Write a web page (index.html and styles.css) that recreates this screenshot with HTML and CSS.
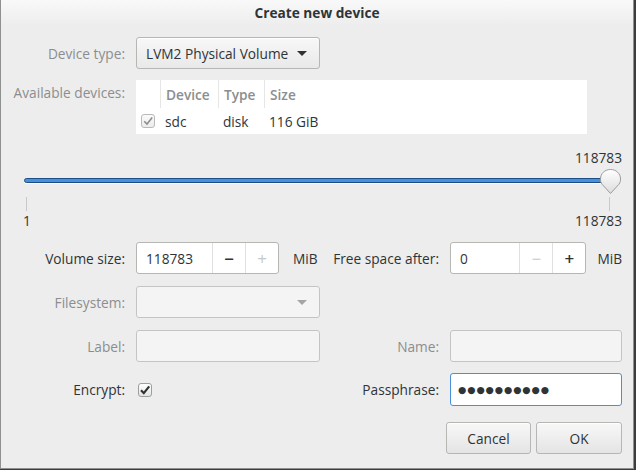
FILE: index.html
```html
<!DOCTYPE html>
<html>
<head>
<meta charset="utf-8">
<link rel="stylesheet" href="styles.css">
</head>
<body>
<div class="window">
  <div class="titlebar">Create new device</div>

  <div class="row r-type">
    <div class="lbl dim">Device type:</div>
    <div class="combo"><span>LVM2 Physical Volume</span><span class="arrow"></span></div>
  </div>

  <div class="row r-devices">
    <div class="lbl dim top">Available devices:</div>
    <div class="table">
      <div class="trow thead">
        <div class="c c0"></div>
        <div class="c c1">Device</div>
        <div class="c c2">Type</div>
        <div class="c c3">Size</div>
      </div>
      <div class="trow tbody">
        <div class="c c0"><span class="check dis"><svg viewBox="0 0 14 14" width="14" height="14"><path d="M3.2 7.2 L6 10 L11.2 3.6" fill="none" stroke="#8b8e8f" stroke-width="1.6"/></svg></span></div>
        <div class="c c1">sdc</div>
        <div class="c c2">disk</div>
        <div class="c c3">116 GiB</div>
      </div>
    </div>
  </div>

  <div class="slider">
    <div class="slider-value">118783</div>
    <div class="track-area">
      <div class="track"></div>
      <svg class="handle" viewBox="0 0 21 26" width="21" height="26">
        <defs><linearGradient id="hg" x1="0" y1="0" x2="0" y2="1"><stop offset="0" stop-color="#ffffff"/><stop offset="1" stop-color="#dcdcdc"/></linearGradient></defs>
        <path d="M10.5 24.5 L2.3 15.5 C0.6 13.6 0.5 11.5 0.5 10 C0.5 4.5 4.8 0.5 10.5 0.5 C16.2 0.5 20.5 4.5 20.5 10 C20.5 11.5 20.4 13.6 18.7 15.5 Z" fill="url(#hg)" stroke="#9a9c9a"/>
      </svg>
    </div>
    <div class="ticks"><span class="tick"></span><span class="tick"></span></div>
    <div class="marks"><span>1</span><span>118783</span></div>
  </div>

  <div class="row r-vol">
    <div class="lbl">Volume size:</div>
    <div class="ctl">
      <div class="spin w1">
        <div class="spin-entry">118783</div>
        <div class="spin-btn">&minus;</div>
        <div class="spin-btn off">+</div>
      </div>
      <span class="unit">MiB</span>
    </div>
    <div class="lbl">Free space after:</div>
    <div class="ctl gap11">
      <div class="spin w2">
        <div class="spin-entry">0</div>
        <div class="spin-btn off">&minus;</div>
        <div class="spin-btn">+</div>
      </div>
      <span class="unit">MiB</span>
    </div>
  </div>

  <div class="row r-fs">
    <div class="lbl dim">Filesystem:</div>
    <div class="combo disabled"><span></span><span class="arrow"></span></div>
  </div>

  <div class="row r-label">
    <div class="lbl dim">Label:</div>
    <div class="entry disabled"></div>
    <div class="lbl dim">Name:</div>
    <div class="entry disabled"></div>
  </div>

  <div class="row r-enc">
    <div class="lbl">Encrypt:</div>
    <div class="ctl"><span class="check on"><svg viewBox="0 0 14 14" width="14" height="14"><path d="M3 7.3 L5.8 10.2 L11.2 3.4" fill="none" stroke="#2e3436" stroke-width="2.2"/></svg></span></div>
    <div class="lbl">Passphrase:</div>
    <div class="entry focus"><span class="dots">●●●●●●●●●●</span></div>
  </div>

  <div class="buttons">
    <div class="btn b-cancel">Cancel</div>
    <div class="btn b-ok">OK</div>
  </div>
</div>
</body>
</html>
```

FILE: styles.css
```css
* { box-sizing: border-box; }
body {
  margin: 0;
  background: #3a3d40;
  font-family: "Open Sans", "Noto Sans", sans-serif;
  font-size: 13.7px;
  color: #2e3436;
}
.window {
  width: 634px;
  height: 469px;
  background: #ededed;
  border: 1px solid #8f9090;
  border-top: 0;
  overflow: hidden;
}
.titlebar {
  height: 25px;
  line-height: 25px;
  text-align: center;
  font-weight: bold;
  color: #2e3436;
  background: linear-gradient(#f9f9f9, #ededed);
}
.row {
  display: grid;
  grid-template-columns: 124px 184px 108px 172px;
  column-gap: 11px;
  align-items: center;
  height: 32px;
}
.lbl { text-align: right; white-space: nowrap; }
.lbl.dim { color: #8b8e8f; }
.lbl.top { align-self: start; padding-top: 3px; }
.r-type { margin-top: 12px; }
.r-devices { margin-top: 11px; height: 54px; align-items: start; }
.r-vol { margin-top: 12px; }
.r-fs { margin-top: 12px; }
.r-label { margin-top: 12px; }
.r-enc { margin-top: 11px; height: 33px; }

.combo {
  height: 32px;
  border: 1px solid #b6b6b3;
  border-radius: 3px;
  background: linear-gradient(#f8f8f8, #e9e9e9);
  display: flex;
  align-items: center;
  justify-content: space-between;
  padding: 0 12px 0 9px;
  box-shadow: inset 0 1px #fff;
}
.combo .arrow {
  width: 0; height: 0;
  border-left: 5px solid transparent;
  border-right: 5px solid transparent;
  border-top: 5px solid #2e3436;
}
.combo.disabled {
  background: #f4f4f4;
  border-color: #c4c5c3;
  box-shadow: none;
}
.combo.disabled .arrow { border-top-color: #a3a5a3; }

.table {
  grid-column: 2 / 5;
  width: 451px;
  height: 54px;
  background: #fff;
}
.trow { display: flex; }
.thead { height: 28px; }
.tbody { height: 26px; }
.c { display: flex; align-items: center; }
.thead .c { color: #8b8e8f; font-weight: 600; border-left: 1px solid #e6e6e6; padding-left: 5px; }
.thead .c0 { border-left: 0; }
.c0 { width: 24px; padding-left: 5px; }
.c1 { width: 58px; padding-left: 5px; }
.c2 { width: 46px; padding-left: 5px; }
.c3 { flex: 1; padding-left: 5px; }

.check {
  display: inline-flex;
  width: 14px; height: 14px;
  border: 1px solid #9d9f9d;
  border-radius: 3px;
  background: linear-gradient(#ffffff, #e4e4e4);
  align-items: center; justify-content: center;
}
.check svg { display: block; margin: -1px; }
.check.dis { border-color: #b9bab8; background: linear-gradient(#fafafa, #ececec); }
.check.on { margin-left: 2px; }

.slider { margin: 16px 11px 0 22px; }
.slider-value { text-align: right; height: 16px; line-height: 16px; }
.track-area { position: relative; height: 30px; }
.track {
  position: absolute;
  left: 1px; right: 14px; top: 12px;
  height: 5px;
  border: 1px solid #1d4e86;
  border-radius: 3px;
  background: #4a90d9;
  box-shadow: 0 1px #fff;
}
.handle { position: absolute; right: 1px; top: 3px; display: block; }
.ticks { height: 16px; display: flex; justify-content: space-between; padding: 1px 12px 1px 3px; }
.tick { width: 1px; height: 14px; background: #c9cac8; }
.marks { height: 18px; line-height: 18px; display: flex; justify-content: space-between; }

.ctl { display: flex; align-items: center; gap: 14px; }
.ctl.gap11 { gap: 11px; }
.spin {
  display: flex;
  height: 32px;
  border: 1px solid #b6b6b3;
  border-radius: 3px;
  background: #fff;
}
.spin.w1 { width: 143px; }
.spin.w2 { width: 137px; }
.spin-entry { flex: 1; display: flex; align-items: center; padding-left: 9px; }
.spin-btn {
  width: 33px;
  border-left: 1px solid #e0e0e0;
  display: flex; align-items: center; justify-content: center;
  font-size: 17px;
  font-weight: 600;
  color: #2e3436;
}
.spin-btn.off { color: #c8c9c7; font-weight: 400; }

.entry {
  height: 100%;
  border: 1px solid #b6b6b3;
  border-radius: 3px;
  background: #fff;
  display: flex; align-items: center;
  padding-left: 7px;
}
.entry.disabled { background: #f4f4f4; border-color: #c4c5c3; }
.entry.focus { border-color: #4a90d9; }
.dots { font-family: "DejaVu Sans", sans-serif; font-size: 9.5px; letter-spacing: 0.9px; color: #2e3436; }

.buttons {
  display: flex;
  justify-content: flex-end;
  gap: 5px;
  margin-top: 16px;
  padding-right: 11px;
}
.btn {
  height: 32px;
  border: 1px solid #b6b6b3;
  border-radius: 3px;
  background: linear-gradient(#f8f8f8, #e4e4e4);
  box-shadow: inset 0 1px #fff;
  display: flex; align-items: center; justify-content: center;
}
.b-cancel { width: 85px; }
.b-ok { width: 86px; }
```
